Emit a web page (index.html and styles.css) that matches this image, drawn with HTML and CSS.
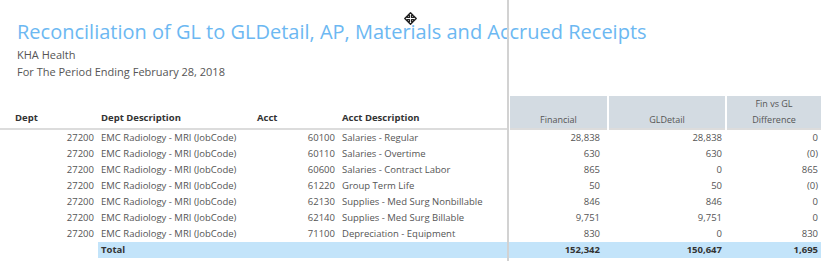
FILE: index.html
```html
<!DOCTYPE html>
<html>
<head>
<meta charset="utf-8">
<link rel="stylesheet" href="styles.css">
</head>
<body>
<div class="page">
  <div class="splitter"></div>
  <svg class="cursor" width="13" height="13" viewBox="0 0 13 13">
    <path d="M6.5 0.8 L9 3.3 L7.6 3.3 L7.6 5.4 L9.7 5.4 L9.7 4 L12.2 6.5 L9.7 9 L9.7 7.6 L7.6 7.6 L7.6 9.7 L9 9.7 L6.5 12.2 L4 9.7 L5.4 9.7 L5.4 7.6 L3.3 7.6 L3.3 9 L0.8 6.5 L3.3 4 L3.3 5.4 L5.4 5.4 L5.4 3.3 L4 3.3 Z" fill="#fff" stroke="#222" stroke-width="1.4" stroke-linejoin="round"/>
  </svg>
  <header class="head">
    <h1 class="title">Reconciliation of GL to GLDetail, AP, Materials and Accrued Receipts</h1>
    <div class="sub">KHA Health</div>
    <div class="sub">For The Period Ending February 28, 2018</div>
  </header>
  <table class="grid">
    <colgroup>
      <col class="c-dept"><col class="c-ddesc"><col class="c-acct"><col class="c-adesc"><col class="c-fin"><col class="c-gld"><col class="c-diff">
    </colgroup>
    <thead>
      <tr>
        <th class="lbl lbl-dept">Dept</th>
        <th class="lbl">Dept Description</th>
        <th class="lbl lbl-acct">Acct</th>
        <th class="lbl">Acct Description</th>
        <th class="meas">Financial</th>
        <th class="meas">GLDetail</th>
        <th class="meas">Fin vs GL<br>Difference</th>
      </tr>
    </thead>
    <tbody>
      <tr><td class="num">27200</td><td>EMC Radiology - MRI (JobCode)</td><td class="num">60100</td><td>Salaries - Regular</td><td class="num">28,838</td><td class="num">28,838</td><td class="num">0</td></tr>
      <tr><td class="num">27200</td><td>EMC Radiology - MRI (JobCode)</td><td class="num">60110</td><td>Salaries - Overtime</td><td class="num">630</td><td class="num">630</td><td class="num">(0)</td></tr>
      <tr><td class="num">27200</td><td>EMC Radiology - MRI (JobCode)</td><td class="num">60600</td><td>Salaries - Contract Labor</td><td class="num">865</td><td class="num">0</td><td class="num">865</td></tr>
      <tr><td class="num">27200</td><td>EMC Radiology - MRI (JobCode)</td><td class="num">61220</td><td>Group Term Life</td><td class="num">50</td><td class="num">50</td><td class="num">(0)</td></tr>
      <tr><td class="num">27200</td><td>EMC Radiology - MRI (JobCode)</td><td class="num">62130</td><td>Supplies - Med Surg Nonbillable</td><td class="num">846</td><td class="num">846</td><td class="num">0</td></tr>
      <tr><td class="num">27200</td><td>EMC Radiology - MRI (JobCode)</td><td class="num">62140</td><td>Supplies - Med Surg Billable</td><td class="num">9,751</td><td class="num">9,751</td><td class="num">0</td></tr>
      <tr><td class="num">27200</td><td>EMC Radiology - MRI (JobCode)</td><td class="num">71100</td><td>Depreciation - Equipment</td><td class="num">830</td><td class="num">0</td><td class="num">830</td></tr>
      <tr class="total"><td class="blank"></td><td class="tot">Total</td><td class="tot"></td><td class="tot"></td><td class="num tot">152,342</td><td class="num tot">150,647</td><td class="num tot">1,695</td></tr>
    </tbody>
  </table>
</div>
</body>
</html>
```

FILE: styles.css
```css
* { box-sizing: border-box; }
html, body { margin: 0; padding: 0; background: #fff; }
body {
  font-family: "Open Sans", "Noto Sans", sans-serif;
  color: #555;
  width: 823px;
  height: 261px;
  overflow: hidden;
}
.page { position: relative; width: 823px; height: 261px; }
.splitter {
  position: absolute;
  left: 507px;
  top: 0;
  width: 2px;
  height: 261px;
  background: #d2d2d2;
  z-index: 2;
}
.cursor { position: absolute; left: 404px; top: 12px; z-index: 3; }
.head { padding: 19px 0 0 17px; height: 96px; }
.title {
  margin: 0;
  font-weight: 400;
  font-size: 20px;
  line-height: 26px;
  color: #6cb8f2;
  letter-spacing: 0;
  white-space: nowrap;
}
.sub {
  font-size: 11px;
  line-height: 17px;
  color: #555;
}
.head .sub:first-of-type { margin-top: 1px; }
.grid {
  border-collapse: collapse;
  table-layout: fixed;
  width: 821px;
  font-size: 9.5px;
}
.c-dept { width: 98px; }
.c-ddesc { width: 153px; }
.c-acct { width: 88px; }
.c-adesc { width: 170px; }
.c-fin { width: 99px; }
.c-gld { width: 118px; }
.c-diff { width: 95px; }
thead tr { height: 31px; border-bottom: 2px solid #dcdcdc; }
th { padding: 0; vertical-align: bottom; }
.lbl {
  text-align: left;
  font-weight: 700;
  color: #333;
  padding: 0 0 3px 3px;
  line-height: 14px;
}
.lbl-dept { padding-left: 15px; }
.lbl-acct { padding-left: 6px; }
.meas {
  background: #d3dbe2;
  border-left: 2px solid #fff;
  font-weight: 400;
  color: #555;
  text-align: center;
  line-height: 16px;
  padding: 0;
  font-size: 9px;
}
td {
  padding: 0 3px;
  height: 16px;
  line-height: 16px;
  white-space: nowrap;
  overflow: hidden;
}
td.num { text-align: right; padding-right: 4px; }
tbody tr td:nth-child(5) { padding-right: 8px; }
tbody tr td:nth-child(6) { padding-right: 4px; }
tbody tr td:nth-child(7) { padding-right: 3px; }
.total td.tot { background: #c3e4fa; font-weight: 700; color: #333; }
.total td.tot:first-of-type { padding-left: 4px; }
```
